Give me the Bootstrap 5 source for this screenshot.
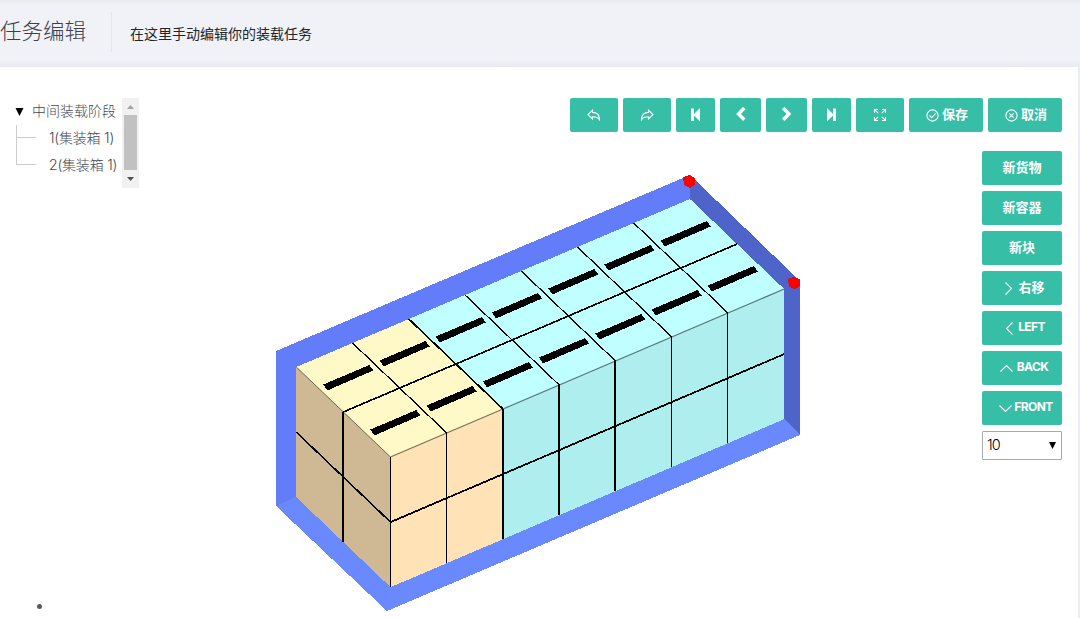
<!DOCTYPE html>
<html lang="zh-CN">
<head>
<meta charset="utf-8">
<meta name="viewport" content="width=device-width, initial-scale=1">
<title>任务编辑</title>
<link href="https://cdn.jsdelivr.net/npm/bootstrap@5.3.0/dist/css/bootstrap.min.css" rel="stylesheet">
<style>
body{font-family:Inter,"Noto Sans CJK SC",sans-serif;font-size:14px;line-height:27px;color:#575962;background:#fff;height:618px}
.subheader{height:67px;background:linear-gradient(#e9eaf1 0,#f1f2f7 5px,#f1f2f7 60px,#e9eaf1 67px)}
.subheader h1{font-size:21.5px;line-height:30px;font-weight:300;color:#3f4047;width:111px;margin-top:16px}
.subheader .intro{border-left:1px solid #e2e5ec;height:40px;margin-top:12px;padding-left:18px;line-height:43px;color:#212529}
.panel{height:551px;border-right:2px solid #ebebf2;padding-top:31px}
.tree-side{width:140px}
.tree-box{height:90px;width:139px}
.tree-view{width:122px;overflow:hidden;white-space:nowrap;font-weight:300;color:#464852}
.tree-view .root-row{padding-left:15px;height:27px;line-height:25px}
.tree-view .root-row svg{margin-right:8px}
.branch{margin-left:16px;border-left:1px solid #ccc;height:40px}
.branch div{height:27px;line-height:25px;letter-spacing:-.2px;padding-left:32px;background:linear-gradient(#ccc,#ccc) 0 12px/19px 1px no-repeat}
.scroll{width:17px;background:#f1f1f1}
.scroll .thumb{width:13px;height:55px;background:#c1c1c1}
.tools{gap:5px;padding-right:16px;height:53px}
.btn-teal{--bs-btn-padding-x:0;--bs-btn-padding-y:0;--bs-btn-font-size:13px;--bs-btn-font-weight:700;--bs-btn-border-width:0;--bs-btn-border-radius:2px;--bs-btn-color:#fff;--bs-btn-bg:#36bea6;--bs-btn-hover-color:#fff;--bs-btn-hover-bg:#2ba993;height:34px;line-height:32px;display:flex;align-items:center;justify-content:center;white-space:nowrap}
.btn-teal span{padding-bottom:2px}
.w48{width:48px}.w39{width:39px}.w41{width:41px}.w74{width:74px}
.w74{padding-left:2px}
.w74 svg{margin-right:3px}
.side{width:80px;gap:6px;margin-right:16px}
.side .latin{font-size:12px;letter-spacing:-.6px;line-height:32px}
.ico{fill:none;stroke:#fff;stroke-width:1.1}
.step-select{height:29px}
.step-select select{appearance:none;width:80px;height:29px;border:1px solid #a9a9a9;border-radius:1px;background:#fff;padding:0 0 2px 4px;font-size:14.5px;font-weight:300;color:#000;letter-spacing:-.9px;line-height:25px}
.step-select svg{right:6px;top:11px}
.dot{width:5px;height:5px;margin:0 0 9px 37px;background:#575962}
</style>
</head>
<body class="overflow-hidden">
<header class="subheader d-flex align-items-start">
<h1 class="mb-0 text-nowrap">任务编辑</h1>
<div class="intro">在这里手动编辑你的装载任务</div>
</header>
<main class="panel d-flex">
<aside class="tree-side d-flex flex-column justify-content-between">
<div class="tree-box d-flex">
<div class="tree-view">
<div class="root-row"><svg width="9" height="8"><path d="M.5 0h8L4.500 8z" fill="#000"/></svg>中间装载阶段</div>
<div class="branch"><div>1(集装箱 1)</div><div>2(集装箱 1)</div></div>
</div>
<div class="scroll d-flex flex-column align-items-center">
<svg width="17" height="17"><path d="M5 11h7L8.500 7z" fill="#a3a3a3"/></svg>
<div class="thumb"></div>
<svg width="17" height="18"><path d="M5 7h7L8.500 11z" fill="#505050"/></svg>
</div>
</div>
<div class="dot rounded-circle"></div>
</aside>
<section class="flex-grow-1">
<div class="tools d-flex justify-content-end">
<button class="btn btn-teal w48" aria-label="撤销"><svg class="ico" width="14" height="12"><path d="M5.500 1.200v2.200c4.500 0 7 2 7 7.200C11 8.100 9 7.700 5.500 7.700V10L1 5.600z"/></svg></button>
<button class="btn btn-teal w48" aria-label="重做"><svg class="ico" width="14" height="12"><path d="M8.500 1.200v2.200c-4.500 0-7 2-7 7.200C3 8.100 5 7.700 8.500 7.700V10L13 5.600z"/></svg></button>
<button class="btn btn-teal w39" aria-label="第一步"><svg width="11" height="14" fill="#fff"><path d="M1 .5h3V6L10 0v13.500l-6-6V13H1z"/></svg></button>
<button class="btn btn-teal w41 pb-1" aria-label="上一步"><svg width="12" height="15" fill="none" stroke="#fff" stroke-width="3.400"><path d="M9.300 2 3.500 8l5.800 5.800"/></svg></button>
<button class="btn btn-teal w41 pb-1" aria-label="下一步"><svg width="12" height="15" fill="none" stroke="#fff" stroke-width="3.400"><path d="M2.200 2 8 8l-5.800 5.800"/></svg></button>
<button class="btn btn-teal w39" aria-label="最后一步"><svg width="11" height="14" fill="#fff"><path d="M10 .5H7V6L1 0v13.500l6-6V13h3z"/></svg></button>
<button class="btn btn-teal w48" aria-label="全屏"><svg class="ico" width="14" height="14"><path d="M1.500 5V1.500H5M1.500 1.500 5.200 5.200M9 1.500h3.500V5M12.500 1.500 8.800 5.200M1.500 9v3.500H5M1.500 12.500 5.200 8.800M9 12.500h3.500V9M12.500 12.500 8.800 8.800"/></svg></button>
<button class="btn btn-teal w74"><svg class="ico" width="13" height="13"><circle cx="6.500" cy="6.500" r="5.600"/><path d="m3.500 6.500 2.200 2.200 4-4.400"/></svg><span>保存</span></button>
<button class="btn btn-teal w74"><svg class="ico" width="13" height="13"><circle cx="6.500" cy="6.500" r="5.600"/><path d="m4.300 4.300 4.400 4.400m0-4.400L4.300 8.700"/></svg><span>取消</span></button>
</div>
<div class="d-flex">
<svg id="scene" width="842" height="467" viewBox="140 151 842 467" class="flex-shrink-0"></svg>
<div class="side d-flex flex-column">
<button class="btn btn-teal"><span>新货物</span></button>
<button class="btn btn-teal"><span>新容器</span></button>
<button class="btn btn-teal"><span>新块</span></button>
<button class="btn btn-teal ps-1"><svg class="ico me-1" width="11" height="13"><path d="m2.500 .5 6 6-6 6"/></svg><span>右移</span></button>
<button class="btn btn-teal latin ps-1"><svg class="ico me-1" width="11" height="14"><path d="m9.500 1.500-6 6 6 6"/></svg><span>LEFT</span></button>
<button class="btn btn-teal latin ps-1"><svg class="ico" width="13" height="14"><path d="m.5 10.500 6-6 6 6"/></svg><span class="ms-1">BACK</span></button>
<button class="btn btn-teal latin ps-2"><svg class="ico" width="13" height="14"><path d="m.5 4.500 6 6 6-6"/></svg><span style="margin-left:2px">FRONT</span></button>
<div class="step-select position-relative"><select aria-label="步长"><option>10</option></select><svg class="position-absolute" width="7" height="7"><path d="M0 0h7L3.500 7z"/></svg></div>
</div>
</div>
</section>
</main>
<script src="https://cdn.jsdelivr.net/npm/bootstrap@5.3.0/dist/js/bootstrap.bundle.min.js"></script>
<script>
// Projection: u runs along the container, v across it, z down its height.
const P=(u,v,z)=>[296.3+56.24*u+47.1*v,367-24*u+45*v+65.1*z];
const poly=(pts,fill)=>`<polygon points="${pts.map(p=>p.join()).join(' ')}" fill="${fill}"/>`;
const line=(a,b,w,c='#000')=>`<path d="M${a}L${b}" stroke="${c}" stroke-width="${w}"/>`;
let s='<g shape-rendering="crispEdges">';
s+=poly([[276,351],[690,175],[690,260],[296,498],[276,506]],'#637dfa');
s+=poly([[690,175],[800,281],[800,435],[784,419],[690,260]],'#4f64c8');
s+=poly([[276,506],[296,497],[784,419],[800,435],[387,611]],'#6b89ff');
for(const [a,b,top,front] of [[0,2,'#fff9c8','#ffe3b6'],[2,7,'#c0ffff','#afeeee']]){
 s+=poly([P(a,0,0),P(b,0,0),P(b,2,0),P(a,2,0)],top);
 s+=poly([P(a,2,0),P(b,2,0),P(b,2,2),P(a,2,2)],front);
}
s+=poly([P(0,0,0),P(0,2,0),P(0,2,2),P(0,0,2)],'#cfb994')+'</g>';
s+=line(P(0,0,0),P(0,2,0),1,'#6d6555')+line(P(0,2,0),P(2,2,0),1.2,'#777158')+line(P(2,2,0),P(7,2,0),1.3,'#587777');
s+='<g shape-rendering="crispEdges">';
s+=line(P(0,1,0),P(7,1,0),1.7)+line(P(0,2,1),P(7,2,1),1.8)+line(P(0,0,1),P(0,2,1),1.6);
for(let i=1;i<7;i++)s+=line(P(i,0,0),P(i,2,0),i==2?1.6:1.3);
for(const [x,y,w] of [[343,412,2],[390.5,457,1],[446.5,433,1],[503,409,2],[559,385,2],[615,361,2],[671.5,337,1],[727.5,313,1]])
 s+=line([x,y],[x,y+130],w);
for(let i=0;i<7;i++)for(let j=0;j<2;j++){
 const [x,y]=P(i,j,0);
 s+=poly([[x+27,y+17.5],[x+73,y-2],[x+77,y+3.5],[x+31,y+23.5]],'#000');
}
for(const [x,y] of [[689,181.5],[794,283]])
 s+=poly([[x-6,y-4],[x,y-6.5],[x+6,y-3.5],[x+6,y+3],[x+1,y+6.5],[x-5,y+3.5]],'#f00')+poly([[x+1,y],[x+6,y-3],[x+6,y+3],[x+1,y+6.5]],'#f40000');
document.getElementById('scene').innerHTML=s+'</g>';
</script>
</body>
</html>
